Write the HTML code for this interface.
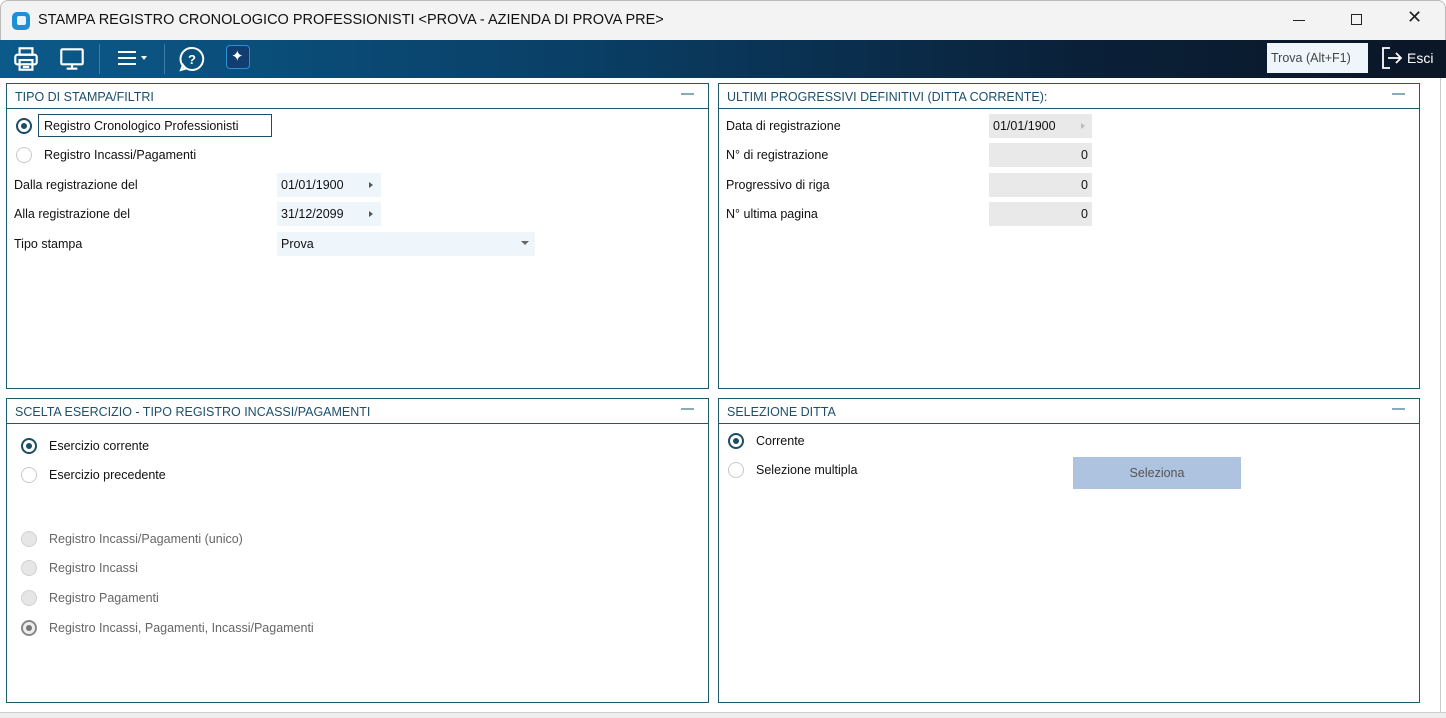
<!DOCTYPE html>
<html><head><meta charset="utf-8"><style>
*{box-sizing:border-box;margin:0;padding:0}
body{width:1446px;height:718px;overflow:hidden;background:#fff;font-family:"Liberation Sans",sans-serif;font-size:12.5px;color:#111;position:relative}
.a{position:absolute}
.title{left:0;top:0;width:1446px;height:40px;background:#f3f3f3;border:1px solid #bbb;border-bottom:none;border-radius:8px 8px 0 0}
.tb{left:0;top:40px;width:1446px;height:38px;background:linear-gradient(90deg,#0b5a8a 0%,#0a3f66 40%,#0a2038 75%,#0b1626 100%)}
.panel{border:1px solid #1d5a6c;background:#fff}
.ph{height:25px;border-bottom:1px solid #1d5a6c;color:#1d4f6a;font-size:12.5px;padding:6px 0 0 8px}
.min{position:absolute;right:14px;top:9px;width:13px;height:2px;background:#8aaabb}
.rad{position:absolute;width:16px;height:16px;border-radius:50%;border:1.5px solid #c9c9c9;background:#fff}
.rad.on{border:2px solid #1c4d66}
.rad.on::after{content:"";position:absolute;left:3px;top:3px;width:6px;height:6px;border-radius:50%;background:#1c4d66}
.rad.dis{border:1px solid #d0d0d0;background:#e6e6e6}
.rad.dison{border:2px solid #888;background:#eee}
.rad.dison::after{content:"";position:absolute;left:3px;top:3px;width:6px;height:6px;border-radius:50%;background:#777}
.fld{position:absolute;background:#eef6fc;height:24px;padding:5px 4px}
.g{background:#e9e9e9}
.tri{position:absolute;width:0;height:0;border-top:3px solid transparent;border-bottom:3px solid transparent;border-left:4px solid #555}
.dis{color:#666}
</style></head><body>
<div class="a title">
 <div class="a" style="left:11px;top:11px;width:18px;height:18px;border-radius:5px;background:#1d8fd6"><div class="a" style="left:5px;top:4px;width:9px;height:9px;border-radius:2px;background:#e8f4ff"></div></div>
 <div class="a" style="left:37px;top:11px;font-size:14.5px;color:#111">STAMPA REGISTRO CRONOLOGICO PROFESSIONISTI &lt;PROVA - AZIENDA DI PROVA PRE&gt;</div>
 <div class="a" style="left:1292px;top:19px;width:12px;height:1px;background:#222"></div>
 <div class="a" style="left:1350px;top:13px;width:11px;height:11px;border:1.2px solid #222"></div>
 <div class="a" style="left:1406px;top:6px;font-size:18px;color:#222">✕</div>
</div>
<div class="a tb">
 <svg class="a" style="left:11px;top:4px" width="30" height="30" viewBox="0 0 28 28" fill="none" stroke="#fff" stroke-width="2"><rect x="8" y="4" width="12" height="6"/><rect x="4" y="10" width="20" height="9" rx="2"/><rect x="8" y="15" width="12" height="9"/><line x1="11" y1="19" x2="17" y2="19"/><line x1="11" y1="21.5" x2="17" y2="21.5"/></svg>
 <svg class="a" style="left:57px;top:4px" width="30" height="30" viewBox="0 0 28 28" fill="none" stroke="#fff" stroke-width="2"><rect x="4" y="5" width="20" height="14" rx="1"/><line x1="14" y1="19" x2="14" y2="23"/><line x1="9" y1="23" x2="19" y2="23"/></svg>
 <div class="a" style="left:99px;top:4px;width:1px;height:30px;background:#3d7ea8"></div>
 <svg class="a" style="left:116px;top:8px" width="36" height="22" viewBox="0 0 36 22" stroke="#fff" stroke-width="2"><line x1="2" y1="4" x2="20" y2="4"/><line x1="2" y1="10" x2="20" y2="10"/><line x1="2" y1="16" x2="20" y2="16"/><path d="M25 8l3 4 3-4z" fill="#fff" stroke="none"/></svg>
 <div class="a" style="left:164px;top:4px;width:1px;height:30px;background:#3d7ea8"></div>
 <svg class="a" style="left:178px;top:5px" width="28" height="28" viewBox="0 0 28 28" fill="none" stroke="#fff" stroke-width="2"><path d="M14 3a11 11 0 1 1-9 17l-2 5 5-1.5A11 11 0 0 1 14 3z"/><text x="14" y="19" font-size="13" fill="#fff" stroke="none" text-anchor="middle" font-family="Liberation Sans" font-weight="bold">?</text></svg>
 <div class="a" style="left:226px;top:5px;width:24px;height:24px;border-radius:4px;background:#123d70;border:1.5px solid #2b8fd8"><div class="a" style="left:4px;top:1px;color:#fff;font-size:15px">✦</div></div>
 <div class="a" style="left:1267px;top:3px;width:101px;height:30px;background:#eef6fc;color:#444;padding:8px 4px;font-size:12.5px">Trova (Alt+F1)</div>
 <svg class="a" style="left:1380px;top:6px" width="24" height="24" viewBox="0 0 24 24" fill="none" stroke="#fff" stroke-width="1.8"><path d="M10 2H3v20h7"/><path d="M8 12h13M16 7l5 5-5 5"/></svg>
 <div class="a" style="left:1407px;top:10px;color:#fff;font-size:14px">Esci</div>
</div>

<div class="a panel" style="left:6px;top:83px;width:703px;height:306px">
 <div class="ph">TIPO DI STAMPA/FILTRI</div><div class="min"></div>
 <div class="rad on" style="left:9px;top:34px"></div>
 <div class="a" style="left:31px;top:30px;width:234px;height:23px;border:1.5px solid #1d4f6a"></div>
 <div class="a" style="left:37px;top:35px">Registro Cronologico Professionisti</div>
 <div class="rad" style="left:9px;top:63px"></div>
 <div class="a" style="left:37px;top:64px">Registro Incassi/Pagamenti</div>
 <div class="a" style="left:7px;top:94px">Dalla registrazione del</div>
 <div class="fld" style="left:270px;top:89px;width:104px">01/01/1900</div><div class="tri" style="left:362px;top:98px"></div>
 <div class="a" style="left:7px;top:123px">Alla registrazione del</div>
 <div class="fld" style="left:270px;top:118px;width:104px">31/12/2099</div><div class="tri" style="left:362px;top:127px"></div>
 <div class="a" style="left:7px;top:153px">Tipo stampa</div>
 <div class="fld" style="left:270px;top:148px;width:258px">Prova</div>
 <div class="a" style="left:514px;top:157px;border-left:4px solid transparent;border-right:4px solid transparent;border-top:4px solid #666"></div>
</div>

<div class="a panel" style="left:718px;top:83px;width:702px;height:306px">
 <div class="ph">ULTIMI PROGRESSIVI DEFINITIVI (DITTA CORRENTE):</div><div class="min"></div>
 <div class="a" style="left:7px;top:35px">Data di registrazione</div>
 <div class="fld g" style="left:270px;top:30px;width:103px">01/01/1900</div><div class="a" style="left:362px;top:39px;border-top:3px solid transparent;border-bottom:3px solid transparent;border-left:4px solid #bbb"></div>
 <div class="a" style="left:7px;top:64px">N° di registrazione</div>
 <div class="fld g" style="left:270px;top:59px;width:103px;text-align:right">0</div>
 <div class="a" style="left:7px;top:94px">Progressivo di riga</div>
 <div class="fld g" style="left:270px;top:89px;width:103px;text-align:right">0</div>
 <div class="a" style="left:7px;top:123px">N° ultima pagina</div>
 <div class="fld g" style="left:270px;top:118px;width:103px;text-align:right">0</div>
</div>

<div class="a panel" style="left:6px;top:398px;width:703px;height:305px">
 <div class="ph">SCELTA ESERCIZIO - TIPO REGISTRO INCASSI/PAGAMENTI</div><div class="min"></div>
 <div class="rad on" style="left:14px;top:39px"></div><div class="a" style="left:42px;top:40px">Esercizio corrente</div>
 <div class="rad" style="left:14px;top:68px"></div><div class="a" style="left:42px;top:69px">Esercizio precedente</div>
 <div class="rad dis" style="left:14px;top:132px"></div><div class="a dis" style="left:42px;top:133px">Registro Incassi/Pagamenti (unico)</div>
 <div class="rad dis" style="left:14px;top:161px"></div><div class="a dis" style="left:42px;top:162px">Registro Incassi</div>
 <div class="rad dis" style="left:14px;top:191px"></div><div class="a dis" style="left:42px;top:192px">Registro Pagamenti</div>
 <div class="rad dison" style="left:14px;top:221px"></div><div class="a dis" style="left:42px;top:222px">Registro Incassi, Pagamenti, Incassi/Pagamenti</div>
</div>

<div class="a panel" style="left:718px;top:398px;width:702px;height:305px">
 <div class="ph">SELEZIONE DITTA</div><div class="min"></div>
 <div class="rad on" style="left:9px;top:34px"></div><div class="a" style="left:37px;top:35px">Corrente</div>
 <div class="rad" style="left:9px;top:63px"></div><div class="a" style="left:37px;top:64px">Selezione multipla</div>
 <div class="a" style="left:354px;top:58px;width:168px;height:32px;background:#adc3df;color:#555;text-align:center;padding-top:9px">Seleziona</div>
</div>
<div class="a" style="left:1440px;top:78px;width:6px;height:640px;background:#fff;border-left:1px solid #ccc"></div>
<div class="a" style="left:0;top:712px;width:1446px;height:6px;background:#eee;border-top:1px solid #ccc"></div>
</body></html>
